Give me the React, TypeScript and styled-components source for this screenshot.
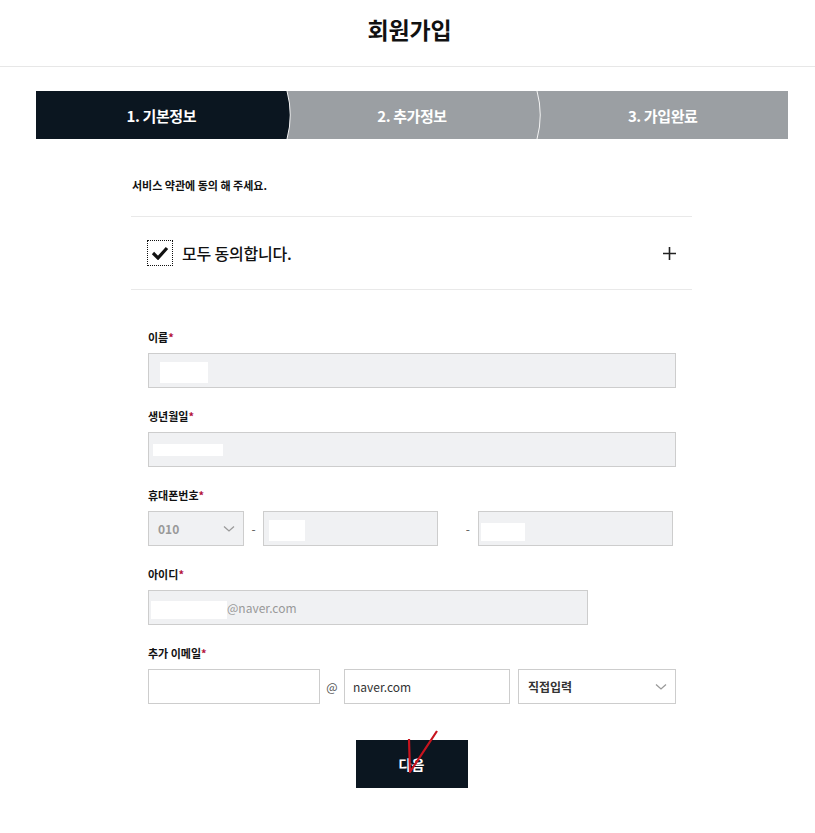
import React from 'react'
import styled, { createGlobalStyle } from 'styled-components'

const GlobalStyle = createGlobalStyle`
  html, body {
    margin: 0;
    padding: 0;
    background: #fff;
    font-family: 'Noto Sans CJK KR', 'Noto Sans', sans-serif;
    color: #111;
  }
`

const Page = styled.div`
  width: 815px;
`

const Header = styled.header`
  height: 66px;
  border-bottom: 1px solid #e7e7e7;
  display: flex;
  align-items: center;
  justify-content: center;
`

const Title = styled.h1`
  margin: 0 0 8px 4px;
  font-size: 23px;
  font-weight: 700;
  letter-spacing: -0.2px;
  color: #111;
`

const Steps = styled.ol`
  list-style: none;
  margin: 24px 27px 0 36px;
  padding: 0;
  height: 48px;
  display: flex;
  background: #9b9fa3;
`

const Step = styled.li<{ $active?: boolean }>`
  position: relative;
  flex: 1;
  display: flex;
  align-items: center;
  justify-content: center;
  background: ${(p) => (p.$active ? '#0b1620' : '#9b9fa3')};
  color: #fff;
  font-size: 15px;
  font-weight: 700;
  letter-spacing: -0.4px;
`

const Chevron = styled.svg`
  position: absolute;
  top: 0;
  left: 100%;
  margin-left: -1px;
  z-index: 1;
`

const Content = styled.div`
  width: 561px;
  margin: 0 auto 0 131px;
  padding-top: 38px;
`

const Notice = styled.p`
  margin: 0 0 0 1px;
  font-size: 11px;
  line-height: 16px;
  font-weight: 700;
  letter-spacing: 0;
`

const AgreeRow = styled.div`
  margin-top: 23px;
  height: 72px;
  border-top: 1px solid #e9e9e9;
  border-bottom: 1px solid #e9e9e9;
  display: flex;
  align-items: center;
  padding: 0 16px;
  gap: 9px;
`

const CheckBox = styled.span`
  width: 24px;
  height: 24px;
  border: 1px dotted #111;
  display: flex;
  align-items: center;
  justify-content: center;
`

const AgreeText = styled.span`
  flex: 1;
  font-size: 16px;
  font-weight: 500;
  letter-spacing: -0.2px;
`

const Form = styled.div`
  padding: 39px 0 0 17px;
  display: flex;
  flex-direction: column;
  gap: 20px;
`

const Group = styled.div`
  display: flex;
  flex-direction: column;
  gap: 8px;
`

const Label = styled.label`
  font-size: 11px;
  line-height: 16px;
  font-weight: 700;
  color: #111;
`

const Required = styled.span`
  color: #b3123b;
`

const Row = styled.div`
  display: flex;
  align-items: center;
`

const Box = styled.div<{ $width: number; $filled?: boolean }>`
  box-sizing: border-box;
  width: ${(p) => p.$width}px;
  height: 35px;
  border: 1px solid #cdcdcd;
  background: ${(p) => (p.$filled ? '#f0f1f3' : '#fff')};
  display: flex;
  align-items: flex-start;
  padding: 0 8px 0 ${(p) => (p.$filled ? 0 : 8)}px;
  font-size: 12px;
  color: #333;
`

const Mask = styled.span<{ $left: number; $top: number; $w: number; $h: number }>`
  flex: none;
  background: #fff;
  margin-left: ${(p) => p.$left}px;
  margin-top: ${(p) => p.$top}px;
  width: ${(p) => p.$w}px;
  height: ${(p) => p.$h}px;
`

const BoxText = styled.span<{ $muted?: boolean; $bold?: boolean }>`
  flex: 1;
  align-self: center;
  color: ${(p) => (p.$muted ? '#999' : '#333')};
  font-weight: ${(p) => (p.$bold ? 700 : 400)};
  font-size: 12px;
`

const Arrow = styled.svg`
  align-self: center;
  flex: none;
`

const Sep = styled.span<{ $width: number; $right?: number }>`
  box-sizing: border-box;
  width: ${(p) => p.$width}px;
  text-align: ${(p) => (p.$right !== undefined ? 'right' : 'center')};
  padding-right: ${(p) => p.$right ?? 0}px;
  font-size: 12px;
  color: #555;
`

const Actions = styled.div`
  display: flex;
  justify-content: center;
  margin-top: 36px;
  padding-bottom: 40px;
`

const NextButton = styled.button`
  position: relative;
  width: 112px;
  height: 48px;
  border: 0;
  background: #0b1620;
  color: #fff;
  font-family: inherit;
  font-size: 14px;
  font-weight: 700;
  cursor: pointer;
`

const Scribble = styled.svg`
  position: absolute;
  left: 44px;
  top: -12px;
`

const StepChevron = ({ from }: { from: string }) => (
  <Chevron width="8" height="48" viewBox="0 0 8 48">
    <path d="M0 0 L1 0 Q7.5 24 1 48 L0 48 Z" fill={from} />
    <path d="M1 0 Q7.5 24 1 48" fill="none" stroke="#f4f4f4" strokeWidth="1" />
  </Chevron>
)

const SelectArrow = () => (
  <Arrow width="12" height="8" viewBox="0 0 12 8">
    <path d="M1 1.5 L6 6 L11 1.5" fill="none" stroke="#9a9a9a" strokeWidth="1.3" />
  </Arrow>
)

export default function App() {
  return (
    <Page>
      <GlobalStyle />
      <Header>
        <Title>회원가입</Title>
      </Header>

      <Steps>
        <Step $active>
          1. 기본정보
          <StepChevron from="#0b1620" />
        </Step>
        <Step>
          2. 추가정보
          <StepChevron from="#9b9fa3" />
        </Step>
        <Step>3. 가입완료</Step>
      </Steps>

      <Content>
        <Notice>서비스 약관에 동의 해 주세요.</Notice>

        <AgreeRow>
          <CheckBox>
            <svg width="18" height="14" viewBox="0 0 18 14">
              <path d="M2 7 L7 12 L16 2" fill="none" stroke="#111" strokeWidth="3.2" />
            </svg>
          </CheckBox>
          <AgreeText>모두 동의합니다.</AgreeText>
          <svg width="13" height="13" viewBox="0 0 13 13">
            <path d="M6.5 0 V13 M0 6.5 H13" stroke="#222" strokeWidth="1.6" />
          </svg>
        </AgreeRow>

        <Form>
          <Group>
            <Label>
              이름<Required>*</Required>
            </Label>
            <Box $width={528} $filled>
              <Mask $left={11} $top={8} $w={48} $h={21} />
            </Box>
          </Group>

          <Group>
            <Label>
              생년월일<Required>*</Required>
            </Label>
            <Box $width={528} $filled>
              <Mask $left={4} $top={11} $w={70} $h={12} />
            </Box>
          </Group>

          <Group>
            <Label>
              휴대폰번호<Required>*</Required>
            </Label>
            <Row>
              <Box $width={96} $filled>
                <BoxText $muted $bold style={{ paddingLeft: 9 }}>
                  010
                </BoxText>
                <SelectArrow />
              </Box>
              <Sep $width={19}>-</Sep>
              <Box $width={175} $filled>
                <Mask $left={5} $top={8} $w={36} $h={21} />
              </Box>
              <Sep $width={40} $right={8}>
                -
              </Sep>
              <Box $width={195} $filled>
                <Mask $left={2} $top={11} $w={44} $h={18} />
              </Box>
            </Row>
          </Group>

          <Group>
            <Label>
              아이디<Required>*</Required>
            </Label>
            <Box $width={440} $filled>
              <Mask $left={2} $top={10} $w={76} $h={18} />
              <BoxText $muted>@naver.com</BoxText>
            </Box>
          </Group>

          <Group>
            <Label>
              추가 이메일<Required>*</Required>
            </Label>
            <Row>
              <Box $width={172} />
              <Sep $width={24}>@</Sep>
              <Box $width={166}>
                <BoxText>naver.com</BoxText>
              </Box>
              <Sep $width={8} />
              <Box $width={158}>
                <BoxText $bold style={{ paddingLeft: 1 }}>
                  직접입력
                </BoxText>
                <SelectArrow />
              </Box>
            </Row>
          </Group>
        </Form>

        <Actions>
          <NextButton>
            다음
            <Scribble width="40" height="50" viewBox="0 0 40 50">
              <path
                d="M9 11 L10 44 L37 3"
                fill="none"
                stroke="#c8141e"
                strokeWidth="2.2"
                strokeLinejoin="round"
              />
            </Scribble>
          </NextButton>
        </Actions>
      </Content>
    </Page>
  )
}
